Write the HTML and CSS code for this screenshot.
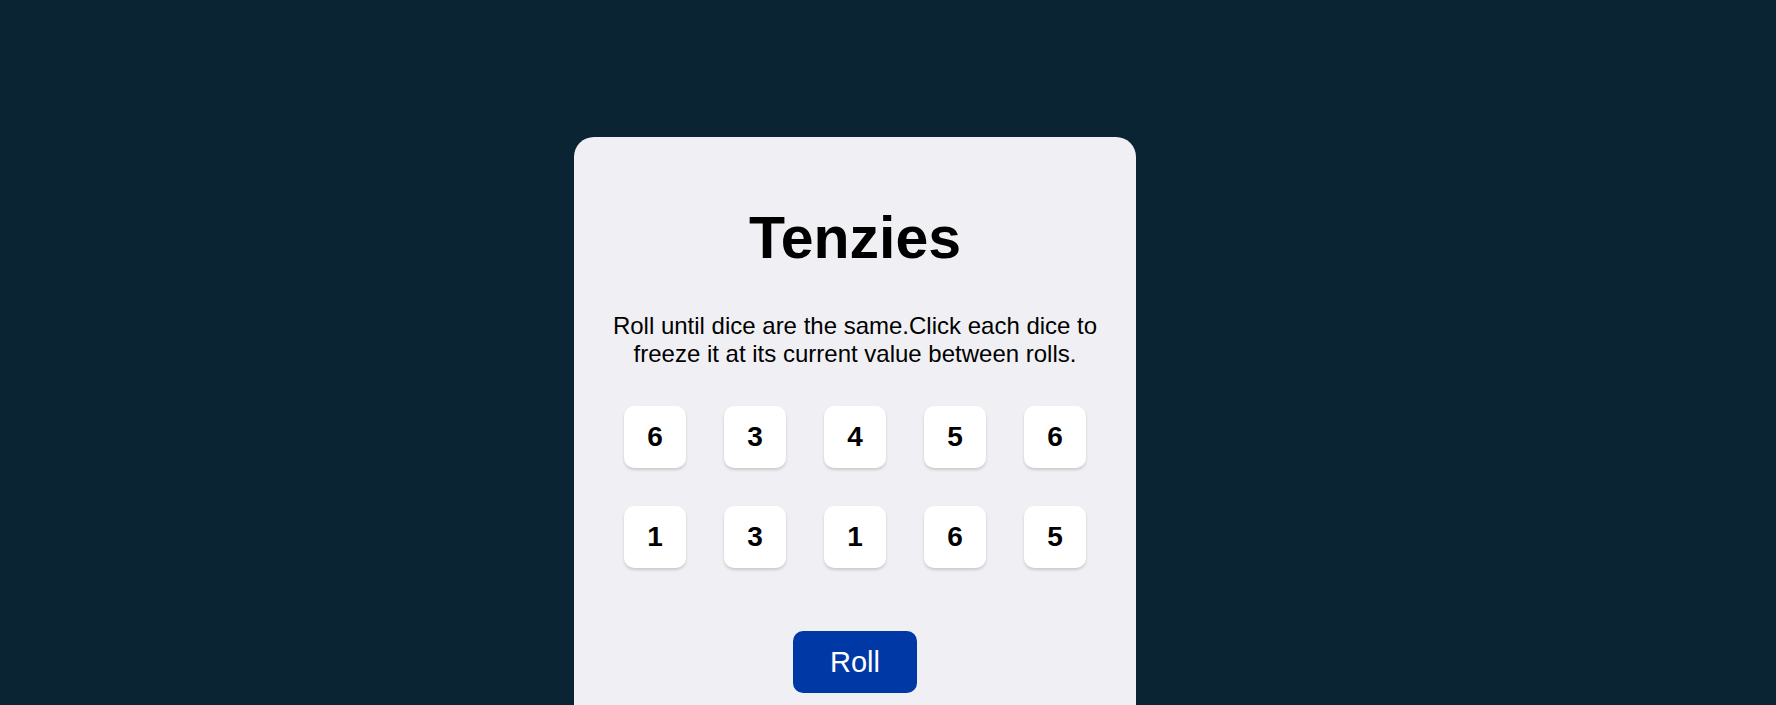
FILE: index.html
```html
<!DOCTYPE html>
<html lang="en">
<head>
<meta charset="utf-8">
<title>Tenzies</title>
<link rel="stylesheet" href="styles.css">
</head>
<body>
<div class="page">
  <main class="card">
    <h1 class="title">Tenzies</h1>
    <p class="instructions">Roll until dice are the same.Click each dice to freeze it at its current value between rolls.</p>
    <div class="dice">
      <button class="die">6</button>
      <button class="die">3</button>
      <button class="die">4</button>
      <button class="die">5</button>
      <button class="die">6</button>
      <button class="die">1</button>
      <button class="die">3</button>
      <button class="die">1</button>
      <button class="die">6</button>
      <button class="die">5</button>
    </div>
    <button class="roll">Roll</button>
  </main>
</div>
</body>
</html>
```

FILE: styles.css
```css
* { box-sizing: border-box; }
html, body {
  margin: 0;
  background: #0b2434;
  font-family: "Liberation Sans", Arial, sans-serif;
  overflow: hidden;
}
.page {
  display: flex;
  justify-content: center;
  padding: 137px 66px 0 0;
}
.card {
  width: 562px;
  min-height: 640px;
  background: #f0f0f4;
  border-radius: 20px;
  padding: 67px 0 60px;
  display: flex;
  flex-direction: column;
  align-items: center;
}
.title {
  margin: 0;
  font-size: 59px;
  line-height: 69px;
  font-weight: 700;
  color: #000;
}
.instructions {
  margin: 39px 0 0;
  max-width: 492px;
  font-size: 24px;
  line-height: 28px;
  text-align: center;
  color: #000;
}
.dice {
  margin-top: 38px;
  display: grid;
  grid-template-columns: repeat(5, 62px);
  grid-auto-rows: 62px;
  gap: 38px;
}
.die {
  width: 62px;
  height: 62px;
  border: none;
  border-radius: 10px;
  background: #fff;
  box-shadow: 0 2px 3px rgba(0, 0, 0, 0.16);
  font-family: "Liberation Sans", Arial, sans-serif;
  font-size: 28px;
  font-weight: 700;
  color: #000;
  padding: 0;
}
.roll {
  margin-top: 63px;
  width: 124px;
  height: 62px;
  border: none;
  border-radius: 10px;
  background: #0039a6;
  color: #fff;
  font-family: "Liberation Sans", Arial, sans-serif;
  font-size: 29px;
  padding: 0;
}
```
